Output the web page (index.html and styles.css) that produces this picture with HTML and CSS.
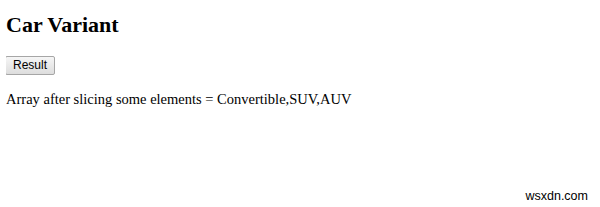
FILE: index.html
```html
<!DOCTYPE html>
<html lang="en">
<head>
    <meta charset="UTF-8">
    <title>Car Variant</title>
    <link rel="stylesheet" href="styles.css">
</head>
<body>
    <h2 class="title">Car Variant</h2>
    <button class="result-btn">Result</button>
    <p class="output">Array after slicing some elements = Convertible,SUV,AUV</p>
    <div class="watermark">wsxdn.com</div>
</body>
</html>
```

FILE: styles.css
```css
body {
    font-family: "Liberation Serif", serif;
    margin: 6px;
    color: #000;
}

.title {
    font-size: 22px;
    margin: 6px 0 17px;
}

.result-btn {
    font-family: "Liberation Sans", Arial, sans-serif;
    font-size: 12px;
    height: 19px;
    width: 50px;
    padding: 0;
    margin-left: -1px;
    color: #000;
    background: linear-gradient(#f6f6f6, #dddddd);
    border: 1px solid #a6a6a6;
    border-radius: 2px;
}

.output {
    font-size: 14.5px;
    margin: 16px 0;
}

/* site watermark, bottom right */
.watermark {
    position: absolute;
    right: 12px;
    bottom: 4px;
    font-family: "Liberation Sans", Arial, sans-serif;
    font-size: 12.5px;
}
```
